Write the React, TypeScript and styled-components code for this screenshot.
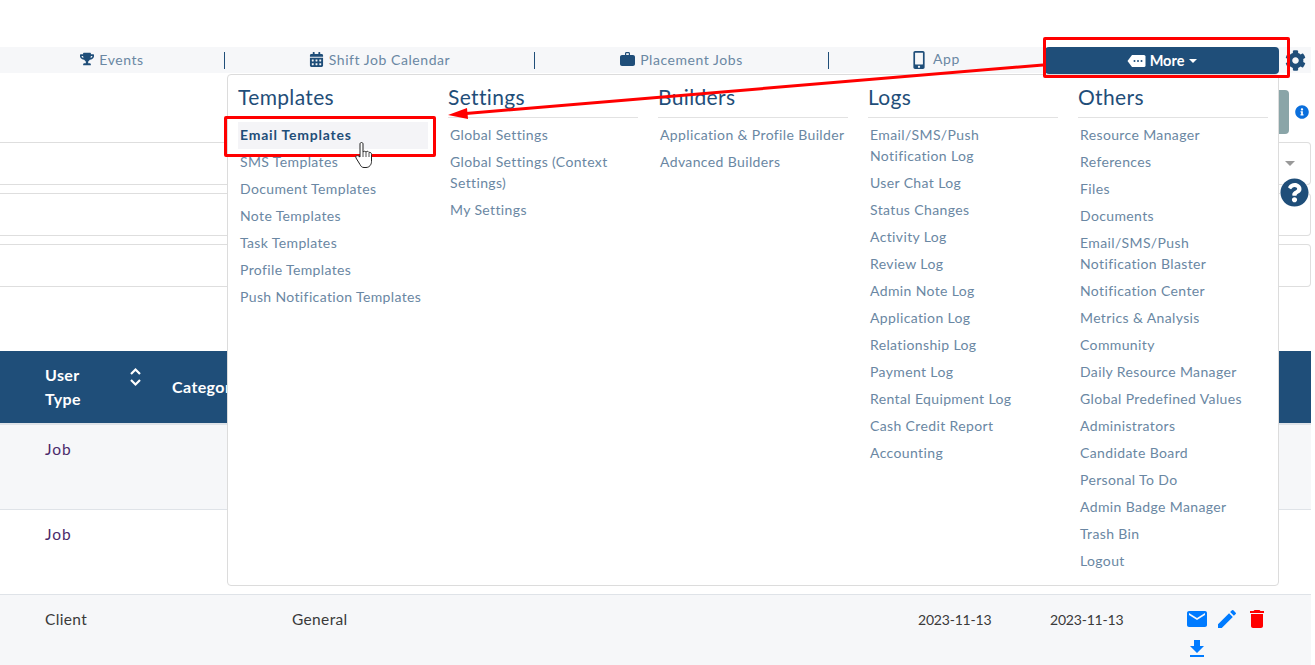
import React from "react";
import styled, { createGlobalStyle } from "styled-components";
import { FaTrophy, FaCalendarAlt, FaMobileAlt, FaCog, FaInfoCircle, FaQuestionCircle } from "react-icons/fa";
import { MdEmail, MdEdit, MdDelete, MdFileDownload } from "react-icons/md";

const Global = createGlobalStyle`
  html, body { margin: 0; padding: 0; background: #fff; overflow: hidden; height: 665px; }
  body { font-family: Lato, "Noto Sans", sans-serif; }
`;

const Page = styled.div`
  position: relative;
  width: 1311px;
  height: 665px;
  padding-top: 47px;
  box-sizing: border-box;
  overflow: hidden;
`;

const Nav = styled.nav`
  display: grid;
  grid-template-columns: 225px 310px 294px 216px 234px 32px;
  height: 26px;
  background: #f6f7f9;
`;

const NavItem = styled.div<{ $divider?: boolean }>`
  display: flex;
  align-items: center;
  justify-content: center;
  gap: 5px;
  color: #6a87a3;
  font-size: 14px;
  line-height: 24px;
  letter-spacing: 0.55px;
  box-sizing: border-box;
  svg { color: #1f4e79; flex: none; }
  ${(p) => (p.$divider ? `border-right: 1px solid #1f4e79; margin: 5px 0 4px; height: 17px;` : `padding: 0 4px 0 0; margin-top: -1px;`)}
`;

const NavLabel = styled.span`
  position: relative;
  top: -1px;
`;

const MoreButton = styled.div`
  display: flex;
  align-items: center;
  justify-content: center;
  gap: 2px;
  background: #1f4e79;
  color: #fff;
  font-weight: 700;
  font-size: 14.5px;
  border-radius: 4px;
  height: 27px;
`;

const Caret = styled.span`
  display: inline-block;
  margin-left: 3px;
  border-top: 4px solid #fff;
  border-left: 4px solid transparent;
  border-right: 4px solid transparent;
`;

const GearCell = styled.div`
  display: flex;
  align-items: center;
  padding-left: 6px;
  color: #1f4e79;
  font-size: 21px;
`;

const Toolbar = styled.div`
  height: 69px;
  display: flex;
  justify-content: flex-end;
  align-items: flex-start;
  padding-top: 17px;
  box-sizing: border-box;
  gap: 6px;
`;

const TealButton = styled.div`
  width: 60px;
  height: 44px;
  background: #8aa5a8;
  border-radius: 4px;
`;

const InfoDot = styled.div`
  color: #0b6fdc;
  font-size: 14px;
  margin: 15px 2px 0 0;
  line-height: 0;
`;

const Filters = styled.div`
  display: flex;
  flex-direction: column;
  gap: 8px;
`;

const FilterBox = styled.div`
  height: 43px;
  border: 1px solid #dedede;
  border-left: 0;
  border-radius: 0 4px 4px 0;
  box-sizing: border-box;
  display: flex;
  justify-content: flex-end;
  align-items: center;
  padding-right: 15px;
`;

const SelectCaret = styled.span`
  border-top: 5px solid #999;
  border-left: 5px solid transparent;
  border-right: 5px solid transparent;
`;

const TableHead = styled.div`
  margin-top: 64px;
  height: 74px;
  box-sizing: border-box;
  background: #1f4e79;
  border-bottom: 2px solid #dfe3e8;
  display: grid;
  grid-template-columns: 172px 1fr;
  align-items: center;
  color: #fff;
  font-weight: 700;
  font-size: 16px;
  line-height: 24px;
  letter-spacing: 0.4px;
`;

const HeadFirst = styled.div`
  position: relative;
  padding-left: 45px;
`;

const SortIcon = styled.svg`
  position: absolute;
  left: 129px;
  top: 4px;
  width: 13px;
  height: 20px;
`;

const Row = styled.div<{ $alt?: boolean }>`
  display: grid;
  grid-template-columns: 292px 626px 132px 137px 1fr;
  height: 85px;
  box-sizing: border-box;
  padding-top: 14px;
  background: ${(p) => (p.$alt ? "#fff" : "#f6f7f9")};
  border-bottom: 1px solid #dfe3e8;
  font-size: 15.5px;
  line-height: 21px;
  color: #3a3a3a;
  letter-spacing: 0.35px;
`;

const Cell = styled.div<{ $first?: boolean }>`
  padding-left: ${(p) => (p.$first ? "45px" : "0")};
`;

const DateCell = styled.div`
  font-size: 14px;
  letter-spacing: -0.2px;
`;

const JobText = styled.span`
  color: #4a2a6a;
  letter-spacing: 1px;
`;

const Actions = styled.div`
  display: grid;
  grid-template-columns: repeat(3, 24px);
  column-gap: 6px;
  font-size: 24px;
  line-height: 0;
  margin-left: -2px;
  margin-top: -2px;
  height: 54px;
  align-content: start;
  row-gap: 6px;
`;

const ActionIcon = styled.span<{ $red?: boolean }>`
  color: ${(p) => (p.$red ? "#f00" : "#007bff")};
  display: block;
  height: 24px;
  svg { display: block; }
`;

const HelpIcon = styled.div`
  position: absolute;
  left: 1280px;
  top: 178px;
  font-size: 29px;
  line-height: 0;
  color: #1f4e79;
  background: #fff;
  border-radius: 50%;
`;

const Menu = styled.div`
  position: absolute;
  left: 227px;
  top: 74px;
  width: 1052px;
  height: 512px;
  box-sizing: border-box;
  background: #fff;
  border: 1px solid #dcdcdc;
  border-radius: 4px;
  padding: 11px 10px 0 10px;
  display: grid;
  grid-template-columns: repeat(5, 190px);
  column-gap: 20px;
`;

const MenuTitle = styled.div`
  color: #1f4e79;
  font-size: 21px;
  line-height: 22px;
  letter-spacing: 0.35px;
  padding-bottom: 9px;
  border-bottom: 1px solid #e2e2e2;
  margin-bottom: 4px;
`;

const MenuItem = styled.div<{ $active?: boolean }>`
  padding: 2px 0 4px 2px;
  font-size: 14px;
  line-height: 21px;
  letter-spacing: ${(p) => (p.$active ? "0.78px" : "0.37px")};
  white-space: pre;
  color: ${(p) => (p.$active ? "#1f4e79" : "#6a87a3")};
  font-weight: ${(p) => (p.$active ? 700 : 400)};
  background: ${(p) => (p.$active ? "#f4f4f7" : "transparent")};
`;

const RedBox = styled.div<{ $l: number; $t: number; $w: number; $h: number }>`
  position: absolute;
  left: ${(p) => p.$l}px;
  top: ${(p) => p.$t}px;
  width: ${(p) => p.$w}px;
  height: ${(p) => p.$h}px;
  box-sizing: border-box;
  border: 3px solid #f00;
  border-radius: 2px;
  pointer-events: none;
`;

const ArrowSvg = styled.svg`
  position: absolute;
  left: 440px;
  top: 55px;
  overflow: visible;
`;

const HandSvg = styled.svg`
  position: absolute;
  left: 355px;
  top: 142px;
`;

const columns: { title: string; items: string[] }[] = [
  { title: "Templates", items: ["Email Templates", "SMS Templates", "Document Templates", "Note Templates", "Task Templates", "Profile Templates", "Push Notification Templates"] },
  { title: "Settings", items: ["Global Settings", "Global Settings (Context\nSettings)", "My Settings"] },
  { title: "Builders", items: ["Application & Profile Builder", "Advanced Builders"] },
  { title: "Logs", items: ["Email/SMS/Push\nNotification Log", "User Chat Log", "Status Changes", "Activity Log", "Review Log", "Admin Note Log", "Application Log", "Relationship Log", "Payment Log", "Rental Equipment Log", "Cash Credit Report", "Accounting"] },
  { title: "Others", items: ["Resource Manager", "References", "Files", "Documents", "Email/SMS/Push\nNotification Blaster", "Notification Center", "Metrics & Analysis", "Community", "Daily Resource Manager", "Global Predefined Values", "Administrators", "Candidate Board", "Personal To Do", "Admin Badge Manager", "Trash Bin", "Logout"] },
];

const MoreIcon = () => (
  <svg width="19" height="14" viewBox="0 0 19 14" style={{ marginRight: 2 }}>
    <path d="M5 1h12a1.500 1.500 0 0 1 1.500 1.500v9A1.500 1.500 0 0 1 17 13H5L.5 7z" fill="#fff" />
    <circle cx="7.500" cy="7" r="1" fill="#1f4e79" />
    <circle cx="11" cy="7" r="1" fill="#1f4e79" />
    <circle cx="14.500" cy="7" r="1" fill="#1f4e79" />
  </svg>
);

const BriefcaseIcon = () => (
  <svg width="15" height="14" viewBox="0 0 15 14" style={{ marginTop: -3 }}>
    <path d="M5 3V1.500C5 .7 5.600 0 6.400 0h2.200C9.400 0 10 .7 10 1.500V3h3c1.100 0 2 .9 2 2v7c0 1.100-.9 2-2 2H2c-1.100 0-2-.9-2-2V5c0-1.100.9-2 2-2zm1.200 0h2.600V1.300H6.200z" fill="#1f4e79" fillRule="evenodd" />
  </svg>
);

const IconLift = styled.span`
  display: flex;
  margin-top: -3px;
`;

export default function App() {
  return (
    <Page>
      <Global />
      <Nav>
        <NavItem $divider><IconLift><FaTrophy size={14} /></IconLift> <NavLabel>Events</NavLabel></NavItem>
        <NavItem $divider><IconLift><FaCalendarAlt size={15} /></IconLift> <NavLabel>Shift Job Calendar</NavLabel></NavItem>
        <NavItem $divider><BriefcaseIcon /> <NavLabel>Placement Jobs</NavLabel></NavItem>
        <NavItem><FaMobileAlt size={18} /> <NavLabel>App</NavLabel></NavItem>
        <MoreButton><MoreIcon /> More <Caret /></MoreButton>
        <GearCell><FaCog /></GearCell>
      </Nav>
      <Toolbar>
        <TealButton />
        <InfoDot><FaInfoCircle /></InfoDot>
      </Toolbar>
      <Filters>
        <FilterBox><SelectCaret /></FilterBox>
        <FilterBox />
        <FilterBox />
      </Filters>
      <TableHead>
        <HeadFirst>
          User<br />Type
          <SortIcon viewBox="0 0 13 20" fill="none" stroke="#fff" strokeWidth="2.2">
            <path d="M2 7l4.500-4.500L11 7M2 13l4.500 4.500L11 13" />
          </SortIcon>
        </HeadFirst>
        <div>Category</div>
      </TableHead>
      <Row>
        <Cell $first><JobText>Job</JobText></Cell>
      </Row>
      <Row $alt>
        <Cell $first><JobText>Job</JobText></Cell>
      </Row>
      <Row>
        <Cell $first>Client</Cell>
        <Cell>General</Cell>
        <DateCell>2023-11-13</DateCell>
        <DateCell>2023-11-13</DateCell>
        <Actions>
          <ActionIcon><MdEmail /></ActionIcon>
          <ActionIcon><MdEdit /></ActionIcon>
          <ActionIcon $red><MdDelete /></ActionIcon>
          <ActionIcon><MdFileDownload /></ActionIcon>
        </Actions>
      </Row>
      <HelpIcon><FaQuestionCircle /></HelpIcon>
      <Menu>
        {columns.map((c) => (
          <div key={c.title}>
            <MenuTitle>{c.title}</MenuTitle>
            {c.items.map((it) => (
              <MenuItem key={it} $active={it === "Email Templates"}>{it}</MenuItem>
            ))}
          </div>
        ))}
      </Menu>
      <RedBox $l={1043} $t={37} $w={247} $h={41} />
      <RedBox $l={224} $t={116} $w={212} $h={41} />
      <ArrowSvg width="610" height="70">
        <path d="M603 10L20 59" stroke="#f00" strokeWidth="3" />
        <path d="M8 60l19-7 1 11z" fill="#f00" />
      </ArrowSvg>
      <HandSvg width="18" height="27" viewBox="0 0 18 27">
        <path d="M5 2c0-2 3-2 3 0v8c1-1 2-1 3 0 1-1 2-1 3 .5 1-.5 2.500 0 2.500 2v7c0 3-2 6-5.500 6H9c-2 0-3-1-4-3L1 16c-1-2 1-3 2.500-2L5 15z" fill="#fff" stroke="#222" strokeWidth="1" />
        <path d="M8 10v5M11 10v5M14 11v4" stroke="#222" strokeWidth=".8" />
      </HandSvg>
    </Page>
  );
}
